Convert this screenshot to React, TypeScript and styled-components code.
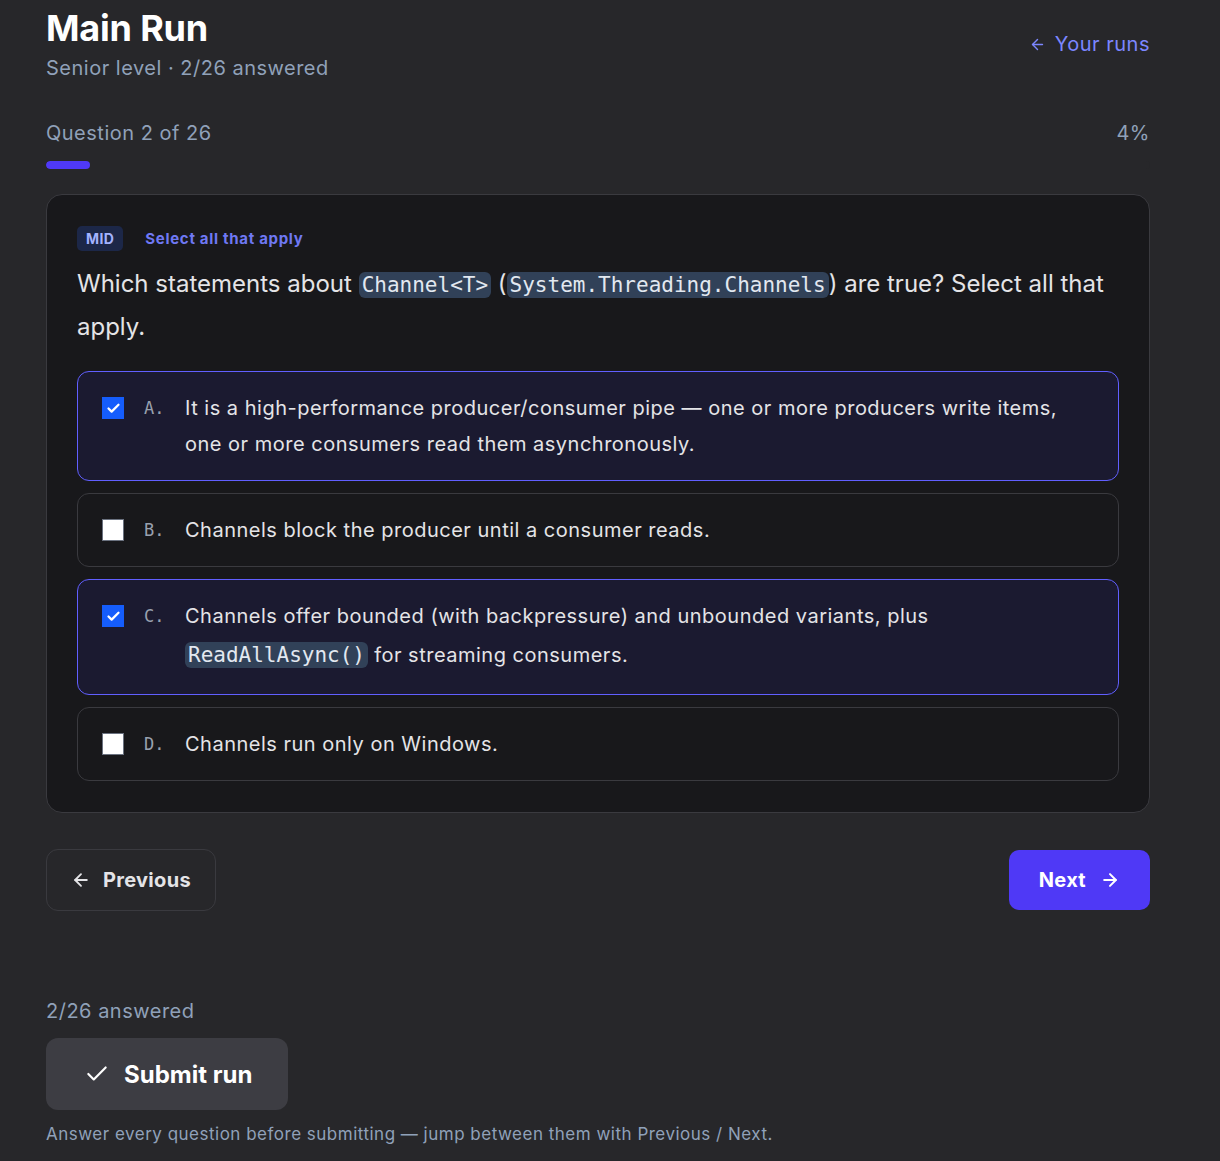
import React, { useState } from 'react';
import styled, { createGlobalStyle } from 'styled-components';
import { ArrowLeft, ArrowRight, Check } from 'lucide-react';

const GlobalStyle = createGlobalStyle`
  html, body {
    margin: 0;
    padding: 0;
    background: #27272a;
  }
  body {
    font-family: Inter, 'Noto Sans', sans-serif;
    color: #e4e4e7;
  }
  * {
    box-sizing: border-box;
  }
`;

interface IOption {
  letter: string;
  content: React.ReactNode;
}

const App = () => {
  const [selected, setSelected] = useState<Array<string>>(['A', 'C']);

  const toggle = (letter: string) => {
    setSelected((prev) => (prev.includes(letter) ? prev.filter((l) => l !== letter) : [...prev, letter]));
  };

  const optionRows = getOptions().map((option) => {
    const isChecked = selected.includes(option.letter);
    return (
      <OptionRow key={option.letter} $checked={isChecked} onClick={() => toggle(option.letter)}>
        <CheckBox $checked={isChecked}>{isChecked && <Check size={15} strokeWidth={3.6} color="#ffffff" />}</CheckBox>
        <Letter>{option.letter}.</Letter>
        <OptionText>{option.content}</OptionText>
      </OptionRow>
    );
  });

  return (
    <Wrapper>
      <GlobalStyle />
      <Header>
        <TitleBox>
          <Title>Main Run</Title>
          <SubTitle>Senior level · 2/26 answered</SubTitle>
        </TitleBox>
        <BackLink>
          <ArrowLeft size={17} strokeWidth={2} />
          Your runs
        </BackLink>
      </Header>

      <ProgressInfo>
        <span>Question 2 of 26</span>
        <span>4%</span>
      </ProgressInfo>
      <ProgressTrack>
        <ProgressFill style={{ width: '4%' }} />
      </ProgressTrack>

      <QuestionCard>
        <TagRow>
          <LevelBadge>MID</LevelBadge>
          <Hint>Select all that apply</Hint>
        </TagRow>
        <Question>
          Which statements about <Code>Channel&lt;T&gt;</Code> (<Code>System.Threading.Channels</Code>) are true? Select
          all that apply.
        </Question>
        <OptionList>{optionRows}</OptionList>
      </QuestionCard>

      <NavRow>
        <PrevButton>
          <ArrowLeft size={20} strokeWidth={2.2} />
          Previous
        </PrevButton>
        <NextButton>
          Next
          <ArrowRight size={20} strokeWidth={2.4} />
        </NextButton>
      </NavRow>

      <Footer>
        <Answered>2/26 answered</Answered>
        <SubmitButton>
          <Check size={26} strokeWidth={2} />
          Submit run
        </SubmitButton>
        <FootNote>Answer every question before submitting — jump between them with Previous / Next.</FootNote>
      </Footer>
    </Wrapper>
  );
};

const Wrapper = styled.div`
  width: 1104px;
  margin-left: 46px;
  padding: 8px 0 18px;
  display: flex;
  flex-direction: column;
`;

const Header = styled.div`
  display: flex;
  flex-direction: row;
  justify-content: space-between;
  align-items: flex-start;
`;

const TitleBox = styled.div`
  display: flex;
  flex-direction: column;
  gap: 6px;
`;

const Title = styled.h1`
  margin: 0;
  font-size: 36px;
  line-height: 40px;
  font-weight: 700;
  color: #ffffff;
  letter-spacing: -0.2px;
`;

const SubTitle = styled.div`
  font-size: 20px;
  line-height: 28px;
  color: #90a1b9;
  letter-spacing: 0.5px;
`;

const BackLink = styled.a`
  margin-top: 22px;
  display: flex;
  align-items: center;
  gap: 9px;
  font-size: 20px;
  line-height: 28px;
  color: #7c86ff;
  letter-spacing: 0.5px;
  cursor: pointer;
`;

const ProgressInfo = styled.div`
  margin-top: 37px;
  display: flex;
  justify-content: space-between;
  font-size: 20px;
  line-height: 28px;
  color: #90a1b9;
  letter-spacing: 0.5px;
`;

const ProgressTrack = styled.div`
  margin-top: 14px;
  width: 100%;
  height: 8px;
  border-radius: 4px;
  background: #27272a;
  overflow: hidden;
`;

const ProgressFill = styled.div`
  height: 100%;
  border-radius: 4px;
  background: #4f39f6;
`;

const QuestionCard = styled.div`
  margin-top: 25px;
  padding: 31px 30px 31px;
  background: #18181b;
  border: 1px solid #3a3a3f;
  border-radius: 16px;
  display: flex;
  flex-direction: column;
`;

const TagRow = styled.div`
  display: flex;
  align-items: center;
  gap: 22px;
`;

const LevelBadge = styled.span`
  padding: 0 9px;
  height: 25px;
  display: flex;
  align-items: center;
  border-radius: 5px;
  background: #1c2748;
  color: #a3b3ff;
  font-size: 14px;
  font-weight: 700;
  letter-spacing: 0.4px;
`;

const Hint = styled.span`
  font-size: 15px;
  font-weight: 700;
  color: #6f78f4;
  letter-spacing: 0.7px;
`;

const Question = styled.p`
  margin: 12px 0 0;
  font-size: 24px;
  line-height: 42px;
  color: #e4e4e7;
`;

const Code = styled.code`
  font-family: 'DejaVu Sans Mono', monospace;
  font-size: 21px;
  padding: 1px 3px;
  border-radius: 6px;
  background: #314158;
  color: #e2e8f0;
  letter-spacing: 0;
`;

const OptionList = styled.div`
  margin-top: 23px;
  display: flex;
  flex-direction: column;
  gap: 12px;
`;

const OptionRow = styled.div<{ $checked: boolean }>`
  padding: 18px 24px;
  display: flex;
  flex-direction: row;
  align-items: flex-start;
  border-radius: 12px;
  border: 1px solid ${(props) => (props.$checked ? '#615fff' : '#3a3a3f')};
  background: ${(props) => (props.$checked ? '#1b1a30' : '#18181b')};
  cursor: pointer;
`;

const CheckBox = styled.span<{ $checked: boolean }>`
  margin-top: 7px;
  flex: 0 0 22px;
  width: 22px;
  height: 22px;
  display: flex;
  align-items: center;
  justify-content: center;
  background: ${(props) => (props.$checked ? '#155dfc' : '#ffffff')};
  border: 1px solid ${(props) => (props.$checked ? '#155dfc' : '#6b7280')};
`;

const Letter = styled.span`
  margin-left: 20px;
  width: 41px;
  flex: 0 0 41px;
  font-family: 'DejaVu Sans Mono', monospace;
  font-size: 17px;
  line-height: 36px;
  color: #99a1af;
`;

const OptionText = styled.div`
  font-size: 20px;
  line-height: 36px;
  color: #e4e4e7;
  letter-spacing: 0.5px;

  ${Code} {
    line-height: 42px;
  }
`;

const NavRow = styled.div`
  margin-top: 36px;
  display: flex;
  justify-content: space-between;
  align-items: center;
`;

const PrevButton = styled.button`
  height: 62px;
  padding: 0 24px;
  display: flex;
  align-items: center;
  gap: 12px;
  border: 1px solid #3a3a3f;
  border-radius: 12px;
  background: transparent;
  color: #e4e4e7;
  font-family: Inter, sans-serif;
  font-size: 20px;
  font-weight: 700;
  letter-spacing: 0.3px;
  cursor: pointer;
`;

const NextButton = styled.button`
  height: 60px;
  padding: 0 30px;
  display: flex;
  align-items: center;
  gap: 14px;
  border: none;
  border-radius: 10px;
  background: #4f39f6;
  color: #ffffff;
  font-family: Inter, sans-serif;
  font-size: 20px;
  font-weight: 700;
  letter-spacing: 0.3px;
  cursor: pointer;
`;

const Footer = styled.div`
  margin-top: 86px;
  display: flex;
  flex-direction: column;
  align-items: flex-start;
`;

const Answered = styled.div`
  font-size: 20px;
  line-height: 28px;
  color: #90a1b9;
  letter-spacing: 0.5px;
`;

const SubmitButton = styled.button`
  margin-top: 13px;
  height: 72px;
  padding: 0 36px 0 38px;
  display: flex;
  align-items: center;
  gap: 14px;
  border: none;
  border-radius: 12px;
  background: #3d3d43;
  color: #ffffff;
  font-family: Inter, sans-serif;
  font-size: 24px;
  font-weight: 700;
  cursor: pointer;
`;

const FootNote = styled.div`
  margin-top: 12px;
  font-size: 17px;
  line-height: 24px;
  color: #90a1b9;
  letter-spacing: 0.5px;
`;

const getOptions = (): Array<IOption> => [
  {
    letter: 'A',
    content: (
      <>
        It is a high-performance producer/consumer pipe — one or more producers write items, one or more consumers read
        them asynchronously.
      </>
    ),
  },
  { letter: 'B', content: <>Channels block the producer until a consumer reads.</> },
  {
    letter: 'C',
    content: (
      <>
        Channels offer bounded (with backpressure) and unbounded variants, plus <Code>ReadAllAsync()</Code> for
        streaming consumers.
      </>
    ),
  },
  { letter: 'D', content: <>Channels run only on Windows.</> },
];

export default App;
